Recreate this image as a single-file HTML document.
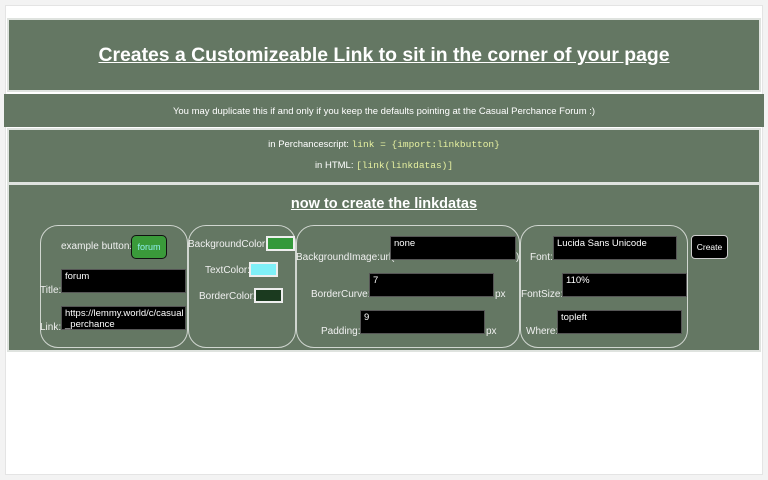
<!DOCTYPE html>
<html><head><style>
*{box-sizing:border-box;margin:0;padding:0}
body{width:768px;height:480px;background:#f3f3f3;font-family:"Liberation Sans",sans-serif;position:relative;overflow:hidden;color:#fff}
.a{position:absolute}
.g{background:#647763}
.bd{border:2px solid #dfe3df}
.t{position:absolute;font-size:10px;white-space:nowrap;color:#f0f0f0}
.ta{position:absolute;background:#000;color:#fff;font-size:9.5px;padding:1px 3px;line-height:11px;border:1px solid #555}
.p{position:absolute;border:1px solid #d0d6d0;border-radius:18px;top:225px;height:123px}
.sw{position:absolute;border:2px solid #eee;height:15px;width:29px}
.mono{font-family:"Liberation Mono",monospace;color:#e6f0a0}
</style></head><body>
<div class="a" style="left:5px;top:5px;width:758px;height:470px;background:#fff;border:1px solid #e4e4e4"></div>
<div class="a g bd" style="left:7px;top:18px;width:754px;height:74px"></div>
<div class="a" style="left:0;top:44px;width:768px;text-align:center;font-size:19.4px;font-weight:bold;text-decoration:underline;color:#fff">Creates a Customizeable Link to sit in the corner of your page</div>
<div class="a g" style="left:4px;top:94px;width:760px;height:33px"></div>
<div class="a" style="left:0;top:106px;width:768px;text-align:center;font-size:9.5px">You may duplicate this if and only if you keep the defaults pointing at the Casual Perchance Forum :)</div>
<div class="a g bd" style="left:7px;top:128px;width:754px;height:56px"></div>
<div class="a" style="left:0;top:139px;width:768px;text-align:center;font-size:9.5px">in Perchancescript: <span class="mono">link = {import:linkbutton}</span></div>
<div class="a" style="left:0;top:160px;width:768px;text-align:center;font-size:9.5px">in HTML: <span class="mono">[link(linkdatas)]</span></div>
<div class="a g bd" style="left:7px;top:183px;width:754px;height:169px"></div>
<div class="a" style="left:0;top:196px;width:768px;text-align:center;font-size:14.5px;font-weight:bold;text-decoration:underline">now to create the linkdatas</div>

<div class="p" style="left:40px;width:148px"></div>
<div class="p" style="left:188px;width:108px"></div>
<div class="p" style="left:296px;width:224px"></div>
<div class="p" style="left:520px;width:168px"></div>

<div class="t" style="left:61px;top:241px">example button:</div>
<div class="a" style="left:131px;top:235px;width:36px;height:24px;background:#3a9a3a;border:1px solid #111;border-radius:5px;font-size:9px;color:#8ef0ee;text-align:center;line-height:22px">forum</div>
<div class="t" style="left:40px;top:285px">Title:</div>
<div class="ta" style="left:61px;top:269px;width:125px;height:24px">forum</div>
<div class="t" style="left:40px;top:322px">Link:</div>
<div class="ta" style="left:61px;top:306px;width:125px;height:24px">https://lemmy.world/c/casual<br>_perchance</div>

<div class="t" style="left:188px;top:239px">BackgroundColor:</div>
<div class="sw" style="left:266px;top:236px;background:#33993a"></div>
<div class="t" style="left:205px;top:265px">TextColor:</div>
<div class="sw" style="left:249px;top:262px;background:#7ff0f8"></div>
<div class="t" style="left:199px;top:291px">BorderColor:</div>
<div class="sw" style="left:254px;top:288px;background:#1b3a1f"></div>

<div class="t" style="left:296px;top:252px">BackgroundImage:url(</div>
<div class="ta" style="left:390px;top:236px;width:126px;height:24px">none</div>
<div class="t" style="left:516px;top:252px">)</div>
<div class="t" style="left:311px;top:289px">BorderCurve:</div>
<div class="ta" style="left:369px;top:273px;width:125px;height:24px">7</div>
<div class="t" style="left:495px;top:289px">px</div>
<div class="t" style="left:321px;top:326px">Padding:</div>
<div class="ta" style="left:360px;top:310px;width:125px;height:24px">9</div>
<div class="t" style="left:486px;top:326px">px</div>

<div class="t" style="left:530px;top:252px">Font:</div>
<div class="ta" style="left:553px;top:236px;width:124px;height:24px">Lucida Sans Unicode</div>
<div class="t" style="left:521px;top:289px">FontSize:</div>
<div class="ta" style="left:562px;top:273px;width:125px;height:24px">110%</div>
<div class="t" style="left:526px;top:326px">Where:</div>
<div class="ta" style="left:557px;top:310px;width:125px;height:24px">topleft</div>

<div class="a" style="left:691px;top:235px;width:37px;height:24px;background:#000;border:1px solid #ccc;border-radius:4px;font-size:8.5px;text-align:center;line-height:22px">Create</div>
</body></html>
